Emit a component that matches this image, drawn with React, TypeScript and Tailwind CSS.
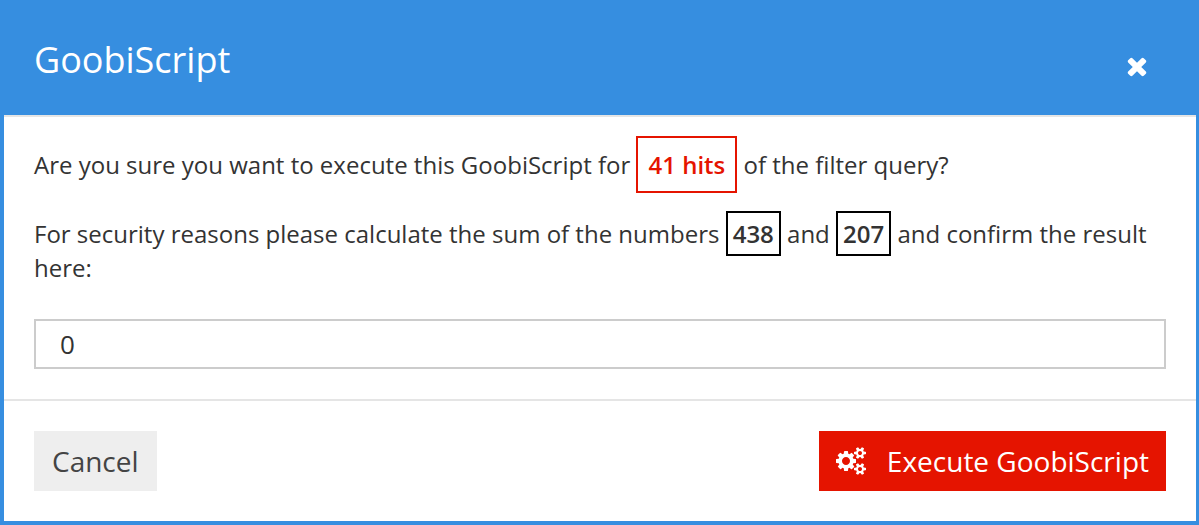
function CloseIcon() {
  return (
    <svg viewBox="0 0 1792 1792" fill="currentColor" aria-hidden="true" className="size-7">
      <path d="M1490 1322q0 40-28 68l-136 136q-28 28-68 28t-68-28l-294-294-294 294q-28 28-68 28t-68-28l-136-136q-28-28-28-68t28-68l294-294-294-294q-28-28-28-68t28-68l136-136q28-28 68-28t68 28l294 294 294-294q28-28 68-28t68 28l136 136q28 28 28 68t-28 68l-294 294 294 294q28 28 28 68z" />
    </svg>
  );
}

function CogsIcon() {
  return (
    <svg viewBox="0 0 1920 1792" fill="currentColor" aria-hidden="true" className="h-7 w-[30px]">
      <path d="M896 896q0-106-75-181t-181-75-181 75-75 181 75 181 181 75 181-75 75-181zm768 512q0-52-38-90t-90-38-90 38-38 90q0 53 37.5 90.5t90.5 37.5 90.5-37.5 37.5-90.5zm0-1024q0-52-38-90t-90-38-90 38-38 90q0 53 37.5 90.5t90.5 37.5 90.5-37.5 37.5-90.5zm-384 421v185q0 10-7 19.5t-16 10.5l-155 24q-11 35-32 76 34 48 90 115 7 11 7 20 0 12-7 19-23 30-82.5 89.5t-78.5 59.5q-11 0-21-7l-115-90q-37 19-77 31-11 108-23 155-7 24-30 24h-186q-11 0-20-7.5t-10-17.5l-23-153q-34-10-75-31l-118 89q-7 7-20 7-11 0-21-8-144-133-144-160 0-9 7-19 10-14 41-53t47-61q-23-44-35-82l-152-24q-10-1-17-9.5t-7-19.5v-185q0-10 7-19.5t16-10.5l155-24q11-35 32-76-34-48-90-115-7-11-7-20 0-12 7-20 22-30 82-89t79-59q11 0 21 7l115 90q34-18 77-32 11-108 23-154 7-24 30-24h186q11 0 20 7.5t10 17.5l23 153q34 10 75 31l118-89q8-7 20-7 11 0 21 8 144 133 144 160 0 8-7 19-12 16-42 54t-45 60q23 48 34 82l152 23q10 2 17 10.5t7 19.5zm640 533v140q0 16-149 31-12 27-30 52 51 113 51 138 0 4-4 7-122 71-124 71-8 0-46-47t-52-68q-20 2-30 2t-30-2q-14 21-52 68t-46 47q-2 0-124-71-4-3-4-7 0-25 51-138-18-25-30-52-149-15-149-31v-140q0-16 149-31 13-29 30-52-51-113-51-138 0-4 4-7 4-2 35-20t59-34 30-16q8 0 46 46.5t52 67.5q20-2 30-2t30 2q51-71 92-112l6-2q4 0 124 70 4 3 4 7 0 25-51 138 17 23 30 52 149 15 149 31zm0-1024v140q0 16-149 31-12 27-30 52 51 113 51 138 0 4-4 7-122 71-124 71-8 0-46-47t-52-68q-20 2-30 2t-30-2q-14 21-52 68t-46 47q-2 0-124-71-4-3-4-7 0-25 51-138-18-25-30-52-149-15-149-31v-140q0-16 149-31 13-29 30-52-51-113-51-138 0-4 4-7 4-2 35-20t59-34 30-16q8 0 46 46.5t52 67.5q20-2 30-2t30 2q51-71 92-112l6-2q4 0 124 70 4 3 4 7 0 25-51 138 17 23 30 52 149 15 149 31z" />
    </svg>
  );
}

export default function App() {
  return (
    <div role="dialog" aria-labelledby="dialog-title" className="border-4 border-t-0 border-r-3 border-[#368ee0] bg-white font-['Open_Sans',sans-serif] text-[#333]">
      <header className="flex items-center justify-between bg-[#368ee0] px-[30px] pt-9 pb-[31px] text-white">
        <h1 id="dialog-title" className="text-[36px] leading-[48px]">GoobiScript</h1>
        <button type="button" aria-label="Close" className="mt-3 mr-[15px]">
          <CloseIcon />
        </button>
      </header>
      <main className="border-t-2 border-[#e5e5e5] px-[30px] pt-[19px] pb-[30px] text-[24px] leading-[34px]">
        <p>
          Are you sure you want to execute this GoobiScript for{" "}
          <strong className="inline-block border-2 border-[#e51400] p-[10px] leading-[33px] font-semibold text-[#e51400]">41 hits</strong>{" "}
          of the filter query?
        </p>
        <label htmlFor="sum" className="mt-6 block">
          For security reasons please calculate the sum of the numbers{" "}
          <strong className="border-2 border-black px-[5px] py-1 font-semibold">438</strong> and{" "}
          <strong className="border-2 border-black px-[5px] py-1 font-semibold">207</strong> and confirm the result here:
        </label>
        <input id="sum" type="text" defaultValue="0" className="mt-[34px] block h-[50px] w-full border-2 border-[#ccc] px-6 text-[26px]" />
      </main>
      <footer className="flex justify-between border-t-2 border-[#e5e5e5] p-[30px] text-[28px] leading-[60px]">
        <button type="button" className="bg-[#eee] px-[18px] text-[#444]">Cancel</button>
        <button type="button" className="flex items-center gap-[21px] bg-[#e51400] px-[17px] text-white">
          <CogsIcon />
          Execute GoobiScript
        </button>
      </footer>
    </div>
  );
}
